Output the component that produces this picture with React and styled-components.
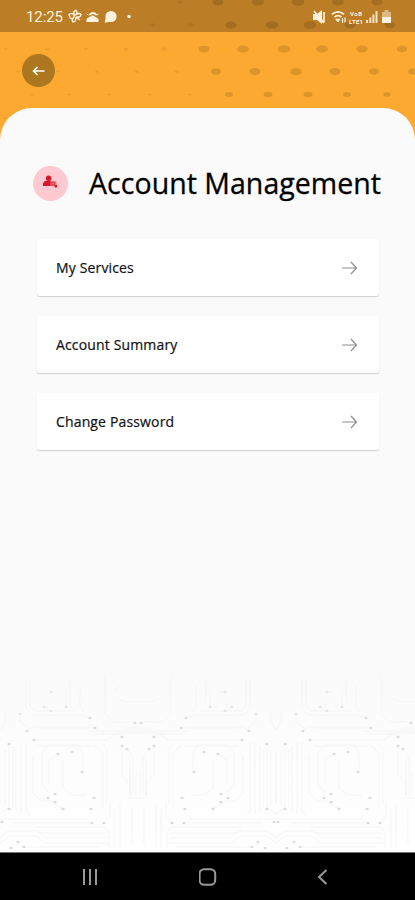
//App.jsx
import React from "react";
import styled, { createGlobalStyle } from "styled-components";

const GlobalStyle = createGlobalStyle`
  * {
    box-sizing: border-box;
  }

  body {
    margin: 0;
    background: #000;
    font-family: "Open Sans", "Noto Sans", sans-serif;
  }

  svg {
    display: block;
  }
`;

// Styled Components for the screen
const Screen = styled.div`
  position: relative;
  display: flex;
  flex-direction: column;
  width: 415px;
  height: 900px;
  overflow: hidden;
  background: #fca932;
`;

const HeaderPattern = styled.svg`
  position: absolute;
  top: 0;
  left: 0;
`;

const StatusBar = styled.div`
  position: relative;
  display: flex;
  align-items: center;
  justify-content: space-between;
  height: 32px;
  flex-shrink: 0;
  padding: 1px 24px 0 26px;
  background: rgba(0, 0, 0, 0.26);
  color: #fff3df;
`;

const StatusGroup = styled.div`
  display: flex;
  align-items: center;
`;

const Clock = styled.span`
  width: 42px;
  font-family: Roboto, sans-serif;
  font-size: 15px;
  line-height: 18px;
  letter-spacing: -0.1px;
`;

const Header = styled.header`
  position: relative;
  height: 76px;
  flex-shrink: 0;
  padding: 22px 22px 0;
`;

const BackButton = styled.button`
  display: flex;
  align-items: center;
  justify-content: center;
  width: 33px;
  height: 33px;
  padding: 0;
  border: none;
  border-radius: 50%;
  background: #ad771f;
  color: #fff;
`;

const Panel = styled.main`
  position: relative;
  flex: 1;
  padding: 57px 36px 0 33px;
  border-radius: 32px 32px 0 0;
  background: #fafafa;
  overflow: hidden;
`;

const Circuit = styled.svg`
  position: absolute;
  left: 0;
  bottom: 0;
`;

const TitleRow = styled.div`
  display: flex;
  align-items: center;
  gap: 21px;
  height: 36px;
`;

const Avatar = styled.div`
  width: 35px;
  height: 35px;
  flex-shrink: 0;
  border-radius: 50%;
  background: #ffc9d1;
`;

const Title = styled.h1`
  margin: 0;
  font-size: 28.5px;
  font-weight: 400;
  line-height: 36px;
  letter-spacing: 0.04px;
  white-space: nowrap;
  color: #000;
  -webkit-text-stroke: 0.3px #000;
`;

const MenuList = styled.div`
  display: flex;
  flex-direction: column;
  gap: 20px;
  margin: 38px 0 0 4px;
`;

const MenuItem = styled.div`
  display: flex;
  align-items: center;
  justify-content: space-between;
  height: 57px;
  padding: 0 21px 0 19px;
  border-radius: 2px;
  background: #fff;
  box-shadow: 0 1px 1px rgba(0, 0, 0, 0.17);
  font-size: 14px;
  letter-spacing: 0.15px;
  color: #111;
  -webkit-text-stroke: 0.2px #111;
`;

const NavBar = styled.nav`
  position: relative;
  display: flex;
  align-items: center;
  justify-content: space-between;
  height: 48px;
  flex-shrink: 0;
  padding: 0 87px 0 82px;
  border-top: 1px solid #777;
  background: #000;
  color: #999;
`;

const menuItems = ["My Services", "Account Summary", "Change Password"];

// halftone rows of the header: y and the x of every dot
const halftone = [
  { y: 2, xs: [180, 218, 258, 298, 338, 377] },
  { y: 25, xs: [153, 191, 231, 272, 310, 350, 390] },
  { y: 49, xs: [6, 47, 86, 126, 164, 204, 243, 284, 322, 362, 402] },
  { y: 71.5, xs: [18, 58, 97, 137, 177, 216, 255, 296, 335, 374, 413] },
  { y: 94.5, xs: [32, 69, 109, 150, 190, 229, 268, 308, 347, 387] },
  { y: 118, xs: [4] },
];

const dotSize = (x, y) => {
  const base = x < 200 ? 1.6 + x / 150 : 6.3 - Math.abs(x - 290) / 100;
  return Math.max(1.7, base - (y > 60 ? 0.4 : 0) - (y > 90 ? 1.3 : 0));
};

// solder points of one half tile, the other half is mirrored
const points = [
  [51, 692], [44, 707], [51, 711], [66, 707], [20, 714], [90, 718],
  [95, 728], [27, 731], [34, 740], [9, 744], [135, 723], [122, 737],
  [122, 746], [127, 749], [58, 754], [72, 752], [82, 772], [55, 794],
  [48, 798], [55, 802], [63, 809], [94, 798], [91, 809], [9, 809],
  [2, 822], [92, 823], [104, 823], [18, 842], [11, 848], [24, 847],
];

const traces = [
  "M51 692h6M44 707l7 4M66 707v-15M70 682v20M80 684v23l4 5",
  "M26 680v28l7 7h50l7 3M30 680v26l5 5h40M105 676v38l8 8h22",
  "M90 734h31l6-6h11M0 730l5-8V711M27 731l6-4h48M34 740h74l9-7h21",
  "M20 714v8l10 7M95 728h-55M88 731h50M118 698l6 4h14M115 690l5-4",
  "M9 744v65M21 742v72M26 743v68l4 4M33 755v38l8 8h9l13 8",
  "M42 753v32l8 8M42 753l7-8h29l5 8v19M58 754l-9 6v24M63 760v28l9 7h14",
  "M94 745l9 8v56M101 743l6 6v54M38 746h54M122 746v28l8 12v10",
  "M127 749l6 8v38M130 768v28M140 770v26M146 757v38",
  "M0 819h87M14 823h77M34 827h70l5 5v14M38 833h68M0 838l8-7h30l8 7h60",
  "M0 843l10-7h26l8 7h62l5 5M24 847h76M0 814l7-5",
  "M115 808v40M120 804v44M128 798h10M132 808v36M104 823l6-7v-13",
  "M0 752v52M5 750v56M13 750v58M16 746v64",
];

const speakerPath = "M0 4h4l5-4v14L4 10H0z";

const StatusIcons = () => (
  <svg width="69" height="18" viewBox="0 0 69 18" fill="none" stroke="currentColor">
    <g transform="translate(0 2)">
      <path d={speakerPath} fill="currentColor" stroke="none" />
      <path d="M1 1l10 12M11 2v10" strokeWidth="1.7" />
    </g>
    <g transform="translate(18 2)" strokeWidth="1.8">
      <path d="M1 4.2Q7 -.5 13 4.2M3.4 7Q7 4.2 10.6 7" />
      <path d="M4.8 9.2h4L7 12z" fill="currentColor" strokeWidth="1" />
      <path d="M11.5 8v5M14 7.5v5" strokeWidth="1.2" />
    </g>
    <g fill="currentColor" stroke="none" fontFamily="Roboto, sans-serif" fontWeight="700">
      <text x="37" y="8" fontSize="6" textLength="12">VoB</text>
      <text x="36" y="15.5" fontSize="6" textLength="14">LTE1</text>
      <path d="M53 12h2v3h-2zM56.3 9.5h2v5.5h-2zM59.4 6.5h2V15h-2zM62.5 3h2v12h-2z" opacity=".85" />
    </g>
  </svg>
);

const BatteryIcon = () => (
  <svg width="9" height="14" viewBox="0 0 9 14" fill="currentColor">
    <path d="M2.6 0h3.8v2H9v5H0V2h2.6z" opacity=".5" />
    <path d="M0 7h9v6H0z" />
  </svg>
);

const NoticeIcons = () => (
  <svg width="66" height="16" viewBox="0 0 66 16" fill="none" stroke="currentColor">
    <g strokeWidth="1.4">
      <path d="M1 5.500q3-2 5 0v3q-3 2-4 0zM6 5.500q-1-4 2-4 2 1 0 4 4-2 5 0 0 3-5 2.500M6 8q-3 3-1 5 3 0 3-5M8 8l4 3" />
    </g>
    <g fill="currentColor" stroke="none" transform="translate(18.500 0)">
      <path d="M0 13q-1-4 3-5 3-3 6 0 4 1 3 5z" />
      <path d="M3 6q3.500-4 7 0" fill="none" stroke="currentColor" strokeWidth="1.8" />
      <path d="M0 5l2 1M12 5l-2 1" stroke="currentColor" />
    </g>
    <g fill="currentColor" stroke="none">
      <circle cx="43" cy="7.5" r="5.6" />
      <path d="M37.5 9l-.7 4.7 5-1z" />
      <circle cx="61" cy="7.500" r="1.7" />
    </g>
  </svg>
);

const ArrowRight = () => (
  <svg width="17" height="14" viewBox="0 0 17 14" fill="none" stroke="#8f8f8f" strokeWidth="1.2">
    <path d="M1 7h14.5M10 1l5.5 6L10 13" />
  </svg>
);

const AccountIcon = () => (
  <svg width="35" height="35" viewBox="0 0 35 35">
    <g fill="#d91629">
      <circle cx="15.6" cy="12.2" r="2.7" />
      <path d="M10 20v-2.2q.5-3 4-3h4.5V20z" />
    </g>
    <path d="M17.5 15.3h6V20h-6z" fill="#ec7886" />
    <circle cx="20" cy="17.6" r="1.6" fill="none" stroke="#d91629" strokeWidth=".8" />
    <path d="M21 19h3.2v2.5H22z" fill="#d91629" />
  </svg>
);

const App = () => {
  return (
    <>
      <GlobalStyle />
      <Screen>
        <HeaderPattern width="415" height="140">
          {halftone.map((row) =>
            row.xs.map((x) => (
              <ellipse
                key={`${x}-${row.y}`}
                cx={x}
                cy={row.y}
                rx={dotSize(x, row.y)}
                ry={dotSize(x, row.y) * 0.62}
                fill="#bd7a22"
                opacity={x < 200 ? 0.26 : 0.45}
              />
            ))
          )}
        </HeaderPattern>
        <StatusBar>
          <StatusGroup>
            <Clock>12:25</Clock>
            <NoticeIcons />
          </StatusGroup>
          <StatusGroup>
            <StatusIcons />
            <BatteryIcon />
          </StatusGroup>
        </StatusBar>
        <Header>
          <BackButton aria-label="Back">
            <svg width="13" height="10" viewBox="0 0 13 10" fill="none" stroke="currentColor" strokeWidth="1.6">
              <path d="M12.5 5H1.5M5.5 1l-4 4 4 4" />
            </svg>
          </BackButton>
        </Header>
        <Panel>
          <Circuit width="415" height="182" viewBox="0 670 415 182">
            <defs>
              <linearGradient id="fade" x1="0" y1="0" x2="0" y2="1">
                <stop offset="0" stopColor="#fafafa" />
                <stop offset="0.5" stopColor="#fdfdfd" />
                <stop offset="1" stopColor="#fefefe" />
              </linearGradient>
              <g id="half">
                <path d={traces.join("")} fill="none" stroke="#f5f5f5" strokeWidth="1" />
                {points.map(([x, y]) => (
                  <ellipse key={`${x}-${y}`} cx={x} cy={y} rx="1.6" ry="1.2" fill={y < 715 ? "#e6e6e6" : "#dcdcdc"} />
                ))}
              </g>
            </defs>
            <rect y="670" width="415" height="182" fill="url(#fade)" />
            <use href="#half" />
            <use href="#half" transform="translate(276 0) scale(-1 1)" />
            <use href="#half" transform="translate(276 0)" />
            <use href="#half" transform="translate(552 0) scale(-1 1)" />
          </Circuit>
          <TitleRow>
            <Avatar>
              <AccountIcon />
            </Avatar>
            <Title>Account Management</Title>
          </TitleRow>
          <MenuList>
            {menuItems.map((item) => (
              <MenuItem key={item}>
                <span>{item}</span>
                <ArrowRight />
              </MenuItem>
            ))}
          </MenuList>
        </Panel>
        <NavBar>
          <svg width="16" height="16" viewBox="0 0 16 16" fill="none" stroke="currentColor" strokeWidth="2">
            <path d="M2 0v16M8 0v16M14 0v16" />
          </svg>
          <svg width="18" height="18" viewBox="0 0 18 18" fill="none" stroke="currentColor" strokeWidth="2">
            <rect x="0.6" y="1.2" width="15.6" height="15.6" rx="4.6" />
          </svg>
          <svg width="11" height="16" viewBox="0 0 11 16" fill="none" stroke="currentColor" strokeWidth="2">
            <path d="M9.5 1L2 8l7.500 7" />
          </svg>
        </NavBar>
      </Screen>
    </>
  );
};

export default App;
